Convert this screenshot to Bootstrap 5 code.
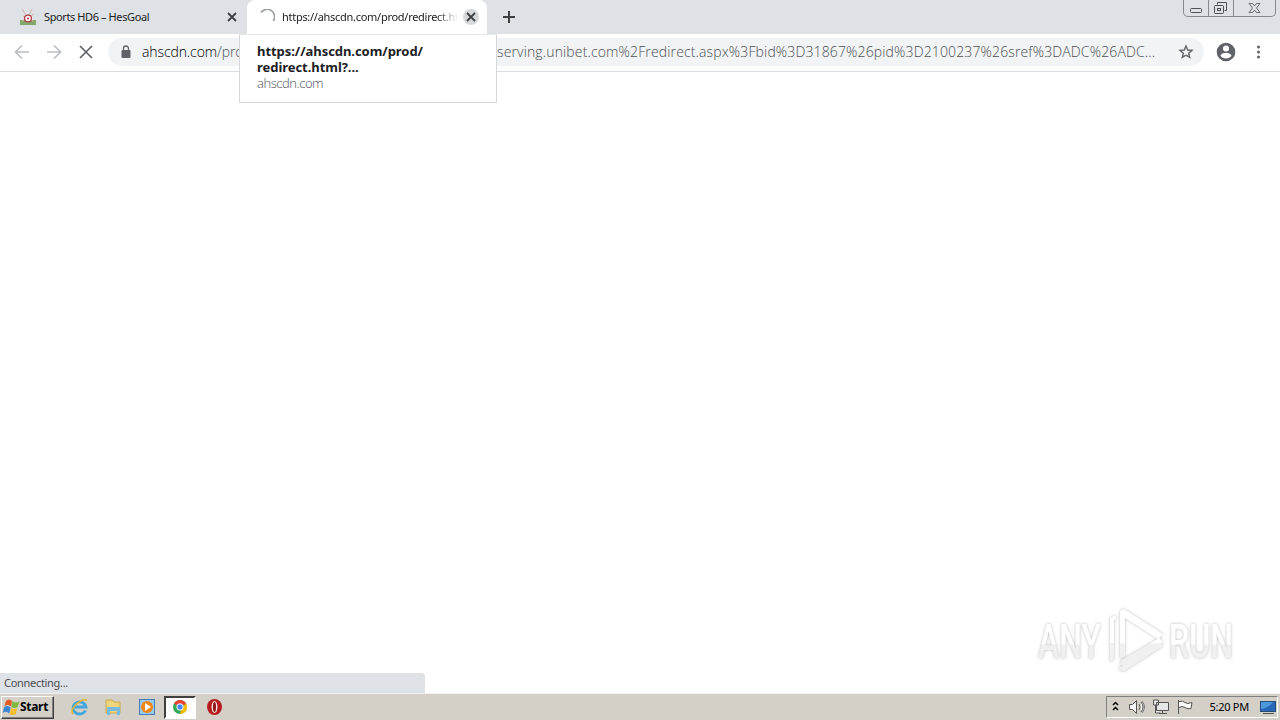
<!DOCTYPE html>
<html lang="en">

<head>
  <meta charset="UTF-8">
  <title>ahscdn.com</title>
  <meta name="viewport" content="width=device-width, initial-scale=1">
  <link href="https://cdn.jsdelivr.net/npm/bootstrap@5.3.0/dist/css/bootstrap.min.css" rel="stylesheet">
  <style>
    body { height: 720px; font-family: "Noto Sans", "Open Sans", sans-serif; font-size: 11px; line-height: 16px; color: #202124; }
    svg { display: block; flex: none; }
    .tabstrip { height: 34px; background: #dee1e6; }
    .tab-idle { width: 247px; padding: 0 7px 0 20px; }
    .tab-live { width: 240px; padding: 0 8px 0 12px; background: #fff; border-radius: 8px 8px 0 0; }
    .tab-title { letter-spacing: -.4px; margin-left: 8px; }
    .tab-live .tab-title { width: 176px; margin-left: 7px; letter-spacing: -.28px; -webkit-mask-image: linear-gradient(90deg, #000 88%, transparent); mask-image: linear-gradient(90deg, #000 88%, transparent); }
    .win-buttons { width: 93px; height: 17px; margin-right: 4px; border: 1px solid #858990; border-top: 0; border-radius: 0 0 5px 5px; }
    .toolbar { height: 38px; border-bottom: 1px solid #dadce0; padding: 0 4px 2px 14px; }
    .omnibox { flex: none; width: 1096px; height: 28px; margin-left: 14px; padding: 0 10px; border-radius: 14px; background: #f1f3f4; font-family: "Open Sans", sans-serif; font-size: 14px; font-weight: 300; color: #4c5054; }
    .url-start { width: 97px; margin: 0 258px 0 8px; letter-spacing: -.1px; }
    .url-start span { color: #000; }
    .url-rest { letter-spacing: .14px; }
    .tab-card { left: 239px; top: 34px; width: 258px; height: 69px; padding: 8px 17px; background: #fff; border: 1px solid #d5d7da; border-top-color: #e6e7e9; font-size: 13px; }
    .tab-card strong { letter-spacing: -.05px; }
    .tab-card div { font-family: "Open Sans", sans-serif; font-weight: 300; letter-spacing: -.45px; color: #4c5054; }
    .watermark { right: 40px; bottom: 17px; }
    .status-bubble { width: 425px; height: 20px; padding: 2px 4px; background: #dee1e6; border-top-right-radius: 4px; color: #4b4e52; letter-spacing: -.3px; }
    .taskbar { height: 27px; background: #d4d0c8; border-top: 1px solid #f4f2ee; padding: 0 2px 0 1px; color: #000; }
    .start-btn { width: 53px; height: 23px; border: 1px solid; border-color: #fff #404040 #404040 #fff; box-shadow: inset -1px -1px #808080; font-size: 12px; letter-spacing: -.3px; }
    .task-chrome { width: 32px; height: 23px; background: #fff; border: 2px solid; border-color: #404040 #fff #fff #404040; }
    .tray { width: 172px; height: 22px; border: 1px solid; border-color: #808080 #fff #fff #808080; }
    .clock { letter-spacing: -.25px; margin-right: 6px; }
  </style>
</head>

<body class="d-flex flex-column overflow-hidden bg-white position-relative text-nowrap">
  <header>
    <div class="tabstrip d-flex">
      <div class="tab-idle d-flex align-items-center">
        <svg width="16" height="18" viewBox="0 0 16 18"><path d="M0 12h16v5H0z" fill="#83a86b"/><path d="M2 1l4 6M12 1l-3 6M3 8l10 5M14 6L2 13" stroke="#d4b0aa"/><circle cx="8" cy="10.500" r="3.400" fill="#fff" stroke="#b03a42" stroke-width="1.300"/><circle cx="8" cy="10.500" r="1" fill="#b3202b"/></svg>
        <div class="tab-title flex-grow-1">Sports HD6 – HesGoal</div>
        <svg width="16" height="16" viewBox="0 0 16 16"><path d="M4 4l8 8M12 4l-8 8" stroke="#3c4043" stroke-width="1.800"/></svg>
      </div>
      <div class="tab-live d-flex align-items-center">
        <svg width="16" height="16" viewBox="0 0 16 16"><path d="M2 3.500A7 7 0 1 1 14.300 12" fill="none" stroke="#9b9ea3" stroke-width="1.700"/></svg>
        <div class="tab-title overflow-hidden">https://ahscdn.com/prod/redirect.ht</div>
        <svg class="ms-auto" width="16" height="16" viewBox="0 0 16 16"><circle cx="8" cy="8" r="8" fill="#d7d8da"/><path d="M4 4l8 8M12 4l-8 8" stroke="#3c4043" stroke-width="1.800"/></svg>
      </div>
      <svg class="align-self-center ms-3" width="12" height="12" viewBox="0 0 12 12"><path d="M6 0v12M0 6h12" stroke="#3c4043" stroke-width="2"/></svg>
      <div class="win-buttons ms-auto">
        <svg width="91" height="16" viewBox="0 0 91 16" fill="none" stroke="#4b5057"><path d="M24.500 0v16M49.500 0v16" stroke="#858990"/><rect x="6.500" y="8.500" width="11" height="4" rx="1"/><path d="M33.500 4.500v-2h9v8h-2"/><rect x="30.500" y="5.500" width="9" height="8" rx="1"/><rect x="33.500" y="8.500" width="3" height="2"/><path d="M65 3.500h3.500l2 2.500 2-2.500H76L72.500 8l3.500 4.500h-3.500l-2-2.500-2 2.500H65L68.500 8z" stroke-width=".8"/></svg>
      </div>
    </div>

    <div class="toolbar d-flex align-items-center">
      <svg width="80" height="16" viewBox="0 0 80 16" fill="none" stroke="#bcbec1" stroke-width="1.700"><path d="M15 8H2M8 1.500L1.500 8 8 14.500M33 8h13M40 1.500L46.500 8 40 14.500"/><path d="M66 2l12 12M78 2L66 14" stroke="#5f6368"/></svg>
      <div class="omnibox d-flex align-items-center">
        <svg width="16" height="16" viewBox="0 0 16 16"><rect x="3.500" y="6" width="9" height="8" rx="1" fill="#5f6368"/><path d="M5.500 7V4.500a2.500 2.500 0 0 1 5 0V7" fill="none" stroke="#5f6368" stroke-width="1.300"/></svg>
        <div class="url-start overflow-hidden"><span>ahscdn.com</span>/pro</div>
        <div class="url-rest">serving.unibet.com%2Fredirect.aspx%3Fbid%3D31867%26pid%3D2100237%26sref%3DADC%26ADC...</div>
        <svg class="ms-auto" width="16" height="16" viewBox="0 0 16 16"><path d="M8 2l1.700 4 4.300.4-3.300 2.800 1 4.200L8 11.200l-3.700 2.200 1-4.200L2 6.400 6.300 6z" fill="none" stroke="#5f6368" stroke-width="1.400"/></svg>
      </div>
      <svg class="ms-2" width="64" height="20" viewBox="0 0 64 20" fill="#5f6368"><path fill-rule="evenodd" d="M14 .7a9.300 9.300 0 1 0 0 18.600A9.300 9.300 0 0 0 14 .7zm0 2.800a3 3 0 1 1 0 6 3 3 0 0 1 0-6zM8.500 13.700c1-4 10-4 11 0-2.300 3.600-8.700 3.600-11 0z"/><circle cx="46.500" cy="5" r="1.500"/><circle cx="46.500" cy="10" r="1.500"/><circle cx="46.500" cy="15" r="1.500"/></svg>
    </div>
  </header>

  <div class="tab-card position-absolute">
    <strong>https://ahscdn.com/prod/<br>redirect.html?...</strong>
    <div>ahscdn.com</div>
  </div>

  <main class="flex-grow-1 d-flex align-items-end position-relative">
    <div class="status-bubble">Connecting...</div>
    <svg class="watermark position-absolute" width="210" height="70" viewBox="0 0 210 70">
      <defs>
        <linearGradient id="fade" x1="0" y1="0" x2="0" y2="1"><stop offset=".54" stop-color="#fff"/><stop offset=".56" stop-color="#f0f0f0"/></linearGradient>
        <filter id="glow" x="-10%" y="-20%" width="120%" height="140%"><feDropShadow dx="0" dy="0" stdDeviation="1.600" flood-color="#777" flood-opacity=".55"/></filter>
      </defs>
      <g filter="url(#glow)" fill="url(#fade)" font-family="Roboto, sans-serif" font-size="49" font-weight="500">
        <text x="8" y="52" textLength="63" lengthAdjust="spacingAndGlyphs">ANY</text>
        <text x="139" y="52" textLength="64" lengthAdjust="spacingAndGlyphs">RUN</text>
        <path d="M90 5l4-2 39 25-5 5-33-21v38l-5 3zM80 12l6-3v4l-2 1v39l-4 3zM92 54l37-22 4 4-39 24-4-2zM89 62l42-25 2 3-39 25-5-1z"/>
      </g>
    </svg>
  </main>

  <footer class="taskbar d-flex align-items-center">
    <div class="start-btn d-flex align-items-center fw-bold">
      <svg width="18" height="18" viewBox="0 0 18 18"><path d="M4 3q3-3 6 0L9 8.500Q6 6 2.500 8z" fill="#e35a24"/><path d="M10.500 3q3 3 7 0l-2 6q-3 2-6 0z" fill="#7db93d"/><path d="M2.200 9q3-2 6.500.5l-1.500 6Q4 12.500.7 15z" fill="#3e86d0"/><path d="M9.300 10q3 2 6 0l-1.500 6q-3 2-6 0z" fill="#f6bd24"/></svg>
      Start
    </div>
    <svg class="ms-3" width="94" height="20" viewBox="0 0 94 20">
      <path d="M15.500 13.500a6.500 6 0 1 1 .5-3.500H5" fill="none" stroke="#43a6df" stroke-width="2.800"/><path d="M3 17C-1 13 10 1 17 3" fill="none" stroke="#e8b52c" stroke-width="1.500"/>
      <path d="M36 3h6l2 2h6v11H36z" fill="#f1d57a" stroke="#c8a84f"/><path d="M37 18v-7q0-1 1-1h11q1 0 1 1v7h-3v-4h-7v4z" fill="#78bbdf"/>
      <rect x="69.500" y="2.500" width="15" height="15" fill="#9bcaf0" stroke="#427fb7"/><circle cx="77" cy="10" r="6" fill="#ef8714"/><path d="M75 6l6 4-6 4z" fill="#fff"/>
    </svg>
    <div class="task-chrome d-flex align-items-center justify-content-center">
      <svg width="14" height="14" viewBox="0 0 14 14"><circle cx="7" cy="7" r="7" fill="#34a853"/><path d="M1 3.500A7 7 0 0 1 13.100 3.500L7 7z" fill="#ea4335"/><path d="M13.100 3.500A7 7 0 0 1 7 14L9 7z" fill="#fbbc05"/><circle cx="7" cy="7" r="3.200" fill="#4285f4" stroke="#fff"/></svg>
    </div>
    <svg class="ms-2" width="20" height="18" viewBox="0 0 20 18"><ellipse cx="10.500" cy="9" rx="7.500" ry="8" fill="#b61b1e"/><ellipse cx="10.500" cy="9" rx="3" ry="6" fill="#f4e5e2"/><ellipse cx="10.500" cy="9" rx="1.500" ry="5" fill="#941316"/></svg>
    <div class="tray d-flex align-items-center ms-auto">
      <svg width="92" height="20" viewBox="0 0 92 20" fill="none" stroke="#555"><path d="M6 8l2.500-2.500L11 8M6 13l2.500-2.500L11 13" stroke="#000" stroke-width="1.500"/><path d="M22.500 7.500h3l4-4v13l-4-4h-3zM32 7q2 3 0 6M34 5q4 5 0 10" fill="#f6f6f6"/><path d="M35 4q5 6 0 12" stroke="#777"/><path d="M49.500 5.500h12v8h-12zM52 16.500h8M55.500 14v2M46.500 3v5h5V3zM48.500 8v8H53" fill="#e6e6e6"/><path d="M71.500 3v14M72 4.500q4-1 6 1t7 0l-1 6q-3 1-6-1t-6 0" fill="#fafafa"/></svg>
      <div class="clock ms-auto">5:20 PM</div>
      <svg class="ms-1" width="18" height="18" viewBox="0 0 18 18"><rect x="1.500" y="3.500" width="15" height="10" fill="#2868b8" stroke="#284c7a"/><path d="M2 4h12Q10 10 2 11z" fill="#4e98dc"/><path d="M4 15.500h11" stroke="#555"/></svg>
    </div>
  </footer>

  <script src="https://cdn.jsdelivr.net/npm/bootstrap@5.3.0/dist/js/bootstrap.bundle.min.js"></script>
</body>
</html>
